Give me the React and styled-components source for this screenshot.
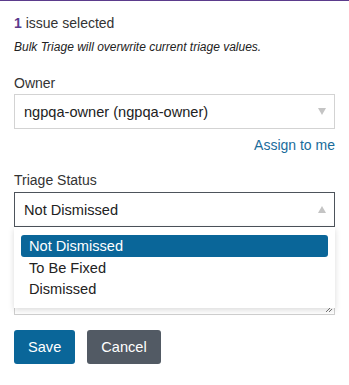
import React from "react";
import styled, { createGlobalStyle } from "styled-components";

const Global = createGlobalStyle`
  html, body { margin: 0; padding: 0; background: #fff; }
  body { font-family: "Liberation Sans", Arial, sans-serif; color: #2b2b2b; }
  * { box-sizing: border-box; }
`;

const Panel = styled.div`
  width: 349px;
  height: 385px;
  border-top: 1px solid #5b3b8c;
  padding: 14px 14px 0 14px;
  display: flex;
  flex-direction: column;
`;

const Count = styled.div`
  font-size: 14px;
  line-height: 16px;
  color: #333;
  b { color: #5b3b8c; font-weight: 700; }
`;

const Note = styled.div`
  margin-top: 9px;
  font-size: 12px;
  font-style: italic;
  line-height: 15px;
  color: #222;
`;

const Label = styled.div`
  font-size: 14px;
  line-height: 16px;
  color: #333;
  margin-top: ${(p) => p.$mt}px;
`;

const SelectBox = styled.div`
  position: relative;
  margin-top: ${(p) => p.$mt}px;
  height: 35px;
  border: 1px solid ${(p) => (p.$open ? "#4d535b" : "#d3d3d3")};
  display: flex;
  align-items: center;
  padding: 0 9px;
  font-size: 14.6px;
  color: #222;
`;

const Arrow = styled.span`
  margin-left: auto;
  margin-right: -1px;
  width: 0;
  height: 0;
  border-left: 4px solid transparent;
  border-right: 4px solid transparent;
  ${(p) =>
    p.$up
      ? "border-bottom: 7px solid #c4c4c4;"
      : "border-top: 7px solid #c4c4c4;"}
`;

const LinkRow = styled.div`
  display: flex;
  justify-content: flex-end;
  margin-top: 8px;
`;

const Link = styled.a`
  font-size: 14px;
  line-height: 16px;
  color: #1a6c9b;
  text-decoration: none;
`;

const FieldWrap = styled.div`
  position: relative;
`;

const Menu = styled.div`
  position: absolute;
  top: 39px;
  left: 0;
  right: 0;
  background: #fff;
  box-shadow: 0 2px 6px rgba(0, 0, 0, 0.15);
  padding: 8px 7px 9px 7px;
  z-index: 2;
`;

const Option = styled.div`
  height: ${(p) => (p.$active ? 22 : 21)}px;
  display: flex;
  align-items: center;
  padding: 0 8px;
  font-size: 14.6px;
  border-radius: 3px;
  background: ${(p) => (p.$active ? "#0a6699" : "transparent")};
  color: ${(p) => (p.$active ? "#fff" : "#222")};
`;

const Textarea = styled.div`
  position: relative;
  margin-top: 8px;
  height: 80px;
  border: 1px solid #cfcfcf;
  background: #fff;
`;

const Grip = styled.svg`
  position: absolute;
  right: 1px;
  bottom: 1px;
`;

const Buttons = styled.div`
  display: flex;
  gap: 12px;
  margin-top: 15px;
`;

const Button = styled.button`
  height: 34px;
  padding: 0 ${(p) => p.$px}px;
  border: none;
  border-radius: 3px;
  background: ${(p) => p.$bg};
  color: #fff;
  font-family: inherit;
  font-size: 14.6px;
`;

export default function App() {
  return (
    <>
      <Global />
      <Panel>
        <Count>
          <b>1</b> issue selected
        </Count>
        <Note>Bulk Triage will overwrite current triage values.</Note>
        <Label $mt={20}>Owner</Label>
        <SelectBox $mt={3}>
          ngpqa-owner (ngpqa-owner)
          <Arrow />
        </SelectBox>
        <LinkRow>
          <Link href="#">Assign to me</Link>
        </LinkRow>
        <Label $mt={19}>Triage Status</Label>
        <FieldWrap>
          <SelectBox $open $mt={4}>
            Not Dismissed
            <Arrow $up />
          </SelectBox>
          <Menu>
            <Option $active>Not Dismissed</Option>
            <Option>To Be Fixed</Option>
            <Option>Dismissed</Option>
          </Menu>
          <Textarea>
            <Grip width="8" height="8" viewBox="0 0 8 8">
              <path d="M7 1 L1 7 M7 4 L4 7" stroke="#777" strokeWidth="1" />
            </Grip>
          </Textarea>
        </FieldWrap>
        <Buttons>
          <Button $bg="#0a6699" $px={14}>Save</Button>
          <Button $bg="#525a64" $px={14}>Cancel</Button>
        </Buttons>
      </Panel>
    </>
  );
}
